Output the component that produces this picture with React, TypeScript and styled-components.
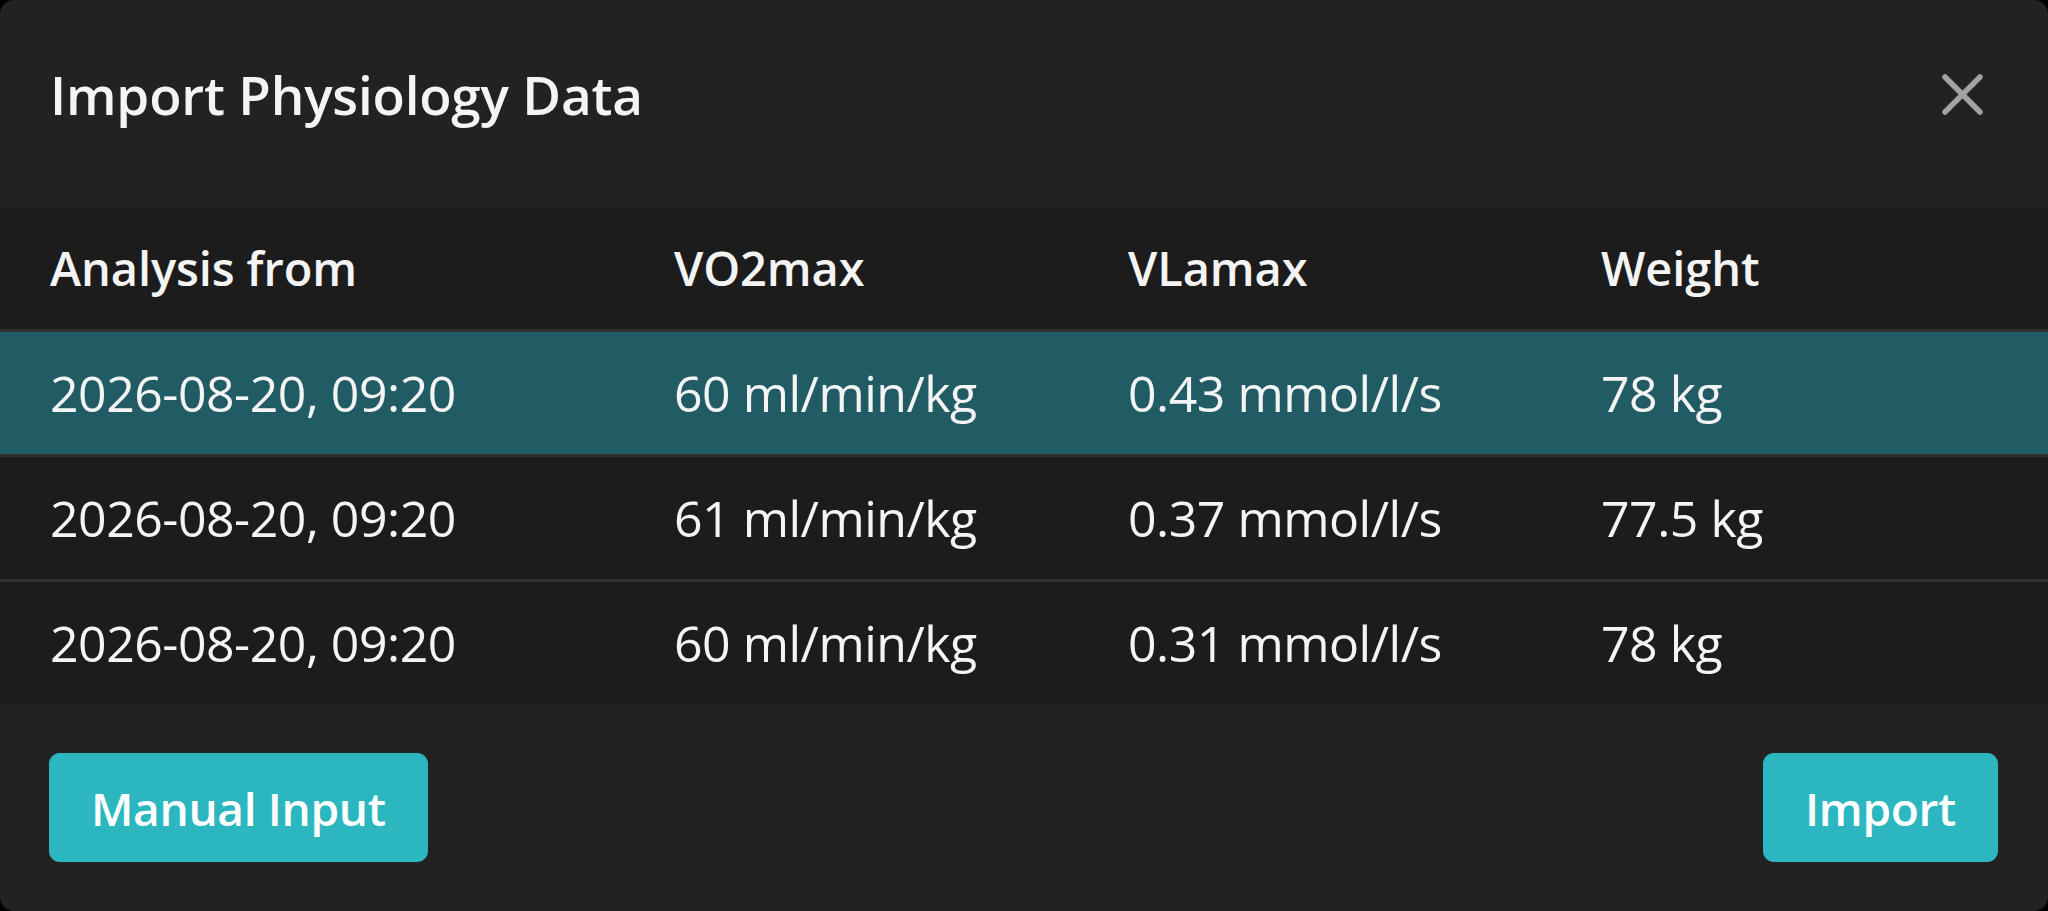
import styled, { createGlobalStyle } from 'styled-components';

type Analysis = {
  date: string;
  vo2max: string;
  vlamax: string;
  weight: string;
};

const rows: Analysis[] = [
  { date: '2026-08-20, 09:20', vo2max: '60 ml/min/kg', vlamax: '0.43 mmol/l/s', weight: '78 kg' },
  { date: '2026-08-20, 09:20', vo2max: '61 ml/min/kg', vlamax: '0.37 mmol/l/s', weight: '77.5 kg' },
  { date: '2026-08-20, 09:20', vo2max: '60 ml/min/kg', vlamax: '0.31 mmol/l/s', weight: '78 kg' },
];

const GlobalStyle = createGlobalStyle`
  html, body {
    margin: 0;
    padding: 0;
    background: #000;
  }
  body {
    font-family: 'Open Sans', 'Noto Sans', sans-serif;
    color: #f4f4f4;
  }
`;

const Modal = styled.div`
  width: 2048px;
  height: 911px;
  background: #222222;
  border-radius: 14px;
  overflow: hidden;
  display: flex;
  flex-direction: column;
`;

const Header = styled.header`
  height: 207px;
  box-sizing: border-box;
  padding: 0 64px 18px 50px;
  display: flex;
  align-items: center;
  justify-content: space-between;
`;

const Title = styled.h1`
  margin: 0;
  font-size: 53px;
  font-weight: 600;
  letter-spacing: -0.2px;
  color: #f4f4f4;
`;

const CloseButton = styled.button`
  background: none;
  border: 0;
  padding: 0;
  width: 43px;
  height: 43px;
  display: flex;
  color: #a2a2a2;
  cursor: pointer;
`;

const Table = styled.div`
  display: flex;
  flex-direction: column;
`;

const Row = styled.div<{ $head?: boolean; $selected?: boolean }>`
  display: grid;
  grid-template-columns: 624px 454px 473px 1fr;
  align-items: center;
  height: 122px;
  padding-left: 50px;
  background: ${({ $selected }) => ($selected ? '#215b64' : '#1c1c1c')};
  border-top: ${({ $head }) => ($head ? 'none' : '3px solid #2f2f2f')};
  font-size: ${({ $head }) => ($head ? '47px' : '50px')};
  font-weight: ${({ $head }) => ($head ? 600 : 400)};
  letter-spacing: ${({ $head }) => ($head ? '-0.1px' : '-0.5px')};
`;

const Cell = styled.div`
  white-space: nowrap;
`;

const Footer = styled.footer`
  flex: 1;
  display: flex;
  align-items: center;
  justify-content: space-between;
  padding: 0 50px 0 49px;
`;

const ActionButton = styled.button`
  height: 109px;
  padding: 0 42px;
  border: 0;
  border-radius: 11px;
  background: #2cb7c0;
  color: #ffffff;
  font-family: 'Open Sans', 'Noto Sans', sans-serif;
  font-size: 46px;
  font-weight: 600;
  letter-spacing: -0.3px;
  cursor: pointer;
`;

const CloseIcon = () => (
  <svg width="43" height="43" viewBox="0 0 43 43" fill="none">
    <path
      d="M4 4 L39 39 M39 4 L4 39"
      stroke="currentColor"
      strokeWidth="5.5"
      strokeLinecap="round"
    />
  </svg>
);

export default function App() {
  return (
    <>
      <GlobalStyle />
      <Modal>
        <Header>
          <Title>Import Physiology Data</Title>
          <CloseButton aria-label="Close">
            <CloseIcon />
          </CloseButton>
        </Header>
        <Table>
          <Row $head>
            <Cell>Analysis from</Cell>
            <Cell>VO2max</Cell>
            <Cell>VLamax</Cell>
            <Cell>Weight</Cell>
          </Row>
          {rows.map((r, i) => (
            <Row key={i} $selected={i === 0}>
              <Cell>{r.date}</Cell>
              <Cell>{r.vo2max}</Cell>
              <Cell>{r.vlamax}</Cell>
              <Cell>{r.weight}</Cell>
            </Row>
          ))}
        </Table>
        <Footer>
          <ActionButton>Manual Input</ActionButton>
          <ActionButton>Import</ActionButton>
        </Footer>
      </Modal>
    </>
  );
}
